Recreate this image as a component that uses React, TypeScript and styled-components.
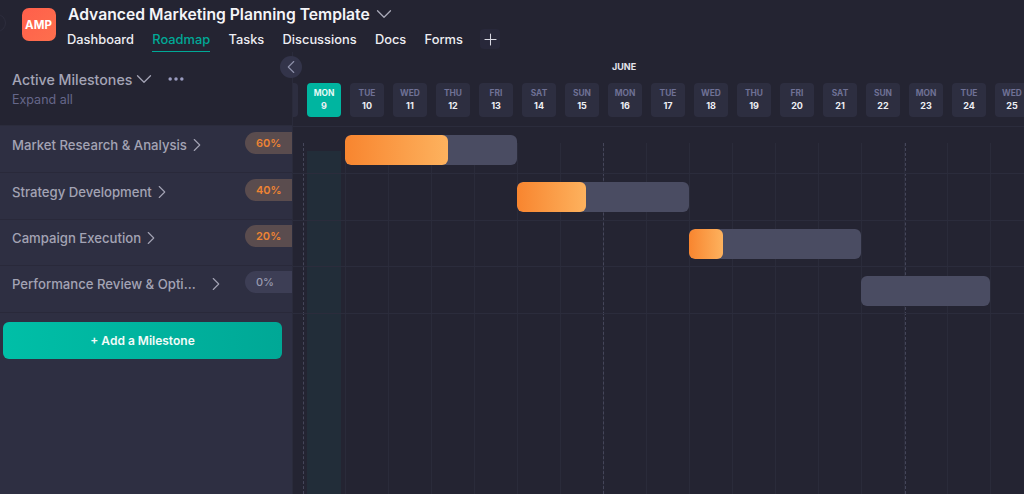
import React from "react";
import styled, { createGlobalStyle } from "styled-components";
import { ChevronDown, ChevronLeft, ChevronRight, Ellipsis, Plus } from "lucide-react";

const GlobalStyle = createGlobalStyle`
  html, body {
    margin: 0;
    padding: 0;
    background: #242432;
    font-family: Inter, "Liberation Sans", sans-serif;
  }
`;

const Page = styled.div`
  position: relative;
  width: 1024px;
  height: 494px;
  overflow: hidden;
  background: #242432;
`;

const EdgeRing = styled.div`
  position: absolute;
  left: -12px;
  top: 14px;
  width: 16px;
  height: 16px;
  border: 1px solid #2d2d3d;
  border-radius: 50%;
`;

const Header = styled.header`
  display: flex;
  gap: 11px;
  height: 52px;
  padding: 8px 0 0 22px;
  box-sizing: border-box;
`;

const Logo = styled.div`
  display: flex;
  align-items: center;
  justify-content: center;
  width: 34px;
  height: 33px;
  padding-right: 1px;
  box-sizing: border-box;
  border-radius: 7px;
  background: linear-gradient(135deg, #ff5f4b, #fd6f4d);
  color: #fff;
  font-size: 11.5px;
  font-weight: 700;
`;

const HeaderText = styled.div`
  display: flex;
  flex-direction: column;
`;

const TitleRow = styled.div`
  display: flex;
  align-items: center;
  gap: 1.5px;
  height: 14px;
  margin: -1px 0 8px 1px;
  svg {
    color: #a9a9b8;
  }
`;

const Title = styled.h1`
  margin: 0;
  font-size: 15.7px;
  font-weight: 600;
  color: #f4f4f8;
`;

const Nav = styled.nav`
  display: flex;
  align-items: flex-start;
  gap: 18.3px;
`;

const NavItem = styled.a<{ $active?: boolean }>`
  height: 19px;
  padding-top: 3px;
  font-size: 12.85px;
  line-height: 16px;
  font-weight: 500;
  color: ${(p) => (p.$active ? "#00a997" : "#eeeef3")};
  border-bottom: 1px solid ${(p) => (p.$active ? "#00a997" : "transparent")};
`;

const AddTab = styled.button`
  display: flex;
  align-items: center;
  justify-content: center;
  width: 20px;
  height: 20px;
  margin-left: -1px;
  padding: 0;
  background: #28283a;
  border: 0;
  border-radius: 4px;
  color: #d8d8e2;
`;

const Main = styled.div`
  display: flex;
  height: 442px;
`;

const Sidebar = styled.aside`
  display: flex;
  flex-direction: column;
  width: 293px;
  flex: none;
  border-right: 1px solid #2a2b3b;
  box-sizing: border-box;
  background: #2e2f42;
`;

const SidebarHead = styled.div`
  height: 74px;
  padding: 17px 12px 0;
  box-sizing: border-box;
  background: #242432;
  border-bottom: 1px solid #2b2c3c;
`;

const MilestoneHeading = styled.div`
  display: flex;
  align-items: center;
  height: 20px;
  color: #a4a4b6;
  font-size: 14.2px;
  font-weight: 500;
  svg {
    color: #a4a4b6;
    flex: none;
  }
`;

const HeadingChevron = styled.span`
  display: flex;
  margin-left: -1.5px;
`;

const Dots = styled.span`
  display: flex;
  margin-left: 9.5px;
  svg {
    color: #9a9cc0;
  }
`;

const ExpandAll = styled.div`
  margin-top: 3px;
  color: #66678a;
  font-size: 12.5px;
  line-height: 16px;
`;

const Row = styled.div<{ $top: number }>`
  display: flex;
  align-items: flex-start;
  height: 46.75px;
  padding: ${(p) => p.$top}px 0 0 12px;
  box-sizing: border-box;
  border-bottom: 1px solid #29293a;
`;

const RowLabel = styled.div`
  display: flex;
  align-items: center;
  flex: 1;
  height: 22px;
  margin-top: 2px;
  color: #a3a3b4;
  font-size: 13.15px;
  font-weight: 500;
  svg {
    color: #a3a3b4;
    flex: none;
    margin-left: -1px;
  }
`;

const LabelText = styled.span<{ $width?: number }>`
  ${(p) => (p.$width ? `width: ${p.$width}px;` : "")}
  white-space: nowrap;
`;

const Pill = styled.div<{ $zero?: boolean }>`
  display: flex;
  align-items: center;
  width: 47px;
  height: 22px;
  padding-left: 11px;
  box-sizing: border-box;
  border-radius: 11px 0 0 11px;
  background: ${(p) => (p.$zero ? "#3d3e55" : "#5a4c4e")};
  color: ${(p) => (p.$zero ? "#9a9bb0" : "#ee8433")};
  font-size: 11px;
  font-weight: ${(p) => (p.$zero ? 500 : 600)};
`;

const AddButton = styled.button`
  display: block;
  width: 279px;
  height: 37px;
  margin: 9px 0 0 3px;
  border: 0;
  border-radius: 6px;
  background: linear-gradient(90deg, #00bfa7, #00a896);
  color: #f2fbf9;
  font-family: inherit;
  font-size: 12px;
  font-weight: 600;
`;

const Timeline = styled.div`
  flex: 1;
  display: flex;
  flex-direction: column;
  min-width: 0;
`;

const Month = styled.div`
  height: 31px;
  padding: 9px 0 0 319px;
  box-sizing: border-box;
  color: #e4e4ec;
  font-size: 9px;
  line-height: 12px;
  font-weight: 700;
`;

const DayStrip = styled.div`
  display: flex;
  gap: 9px;
  height: 43px;
  border-bottom: 1px solid #2b2c3c;
`;

const DayStub = styled.div`
  flex: none;
  width: 5px;
  height: 34px;
  background: #2d2e40;
  border-radius: 0 4px 4px 0;
`;

const Day = styled.div<{ $today?: boolean }>`
  display: flex;
  flex: none;
  flex-direction: column;
  align-items: center;
  gap: 3px;
  width: 34px;
  height: 34px;
  padding-top: 5px;
  box-sizing: border-box;
  border-radius: 4px;
  background: ${(p) => (p.$today ? "#00b5a0" : "#2d2e40")};
  line-height: 10px;
  font-weight: 700;
`;

const DayName = styled.span<{ $today?: boolean }>`
  color: ${(p) => (p.$today ? "#e4faf6" : "#6f7195")};
  font-size: 8.4px;
`;

const DayNum = styled.span`
  color: #eeeef4;
  font-size: 9px;
`;

const Chart = styled.div`
  position: relative;
  flex: 1;
`;

const GridLines = styled.div`
  position: absolute;
  top: 16px;
  left: 52px;
  right: 0;
  bottom: 0;
  background: repeating-linear-gradient(
    90deg,
    #2a2b3a 0,
    #2a2b3a 1px,
    transparent 1px,
    transparent 43px
  );
`;

const WeekLine = styled.div<{ $x: number }>`
  position: absolute;
  top: 16px;
  bottom: 0;
  left: ${(p) => p.$x}px;
  border-left: 1px dashed #45465a;
`;

const TodayColumn = styled.div`
  position: absolute;
  top: 24px;
  bottom: 0;
  left: 14px;
  width: 34px;
  background: #222d39;
`;

const GanttRow = styled.div`
  position: relative;
  display: grid;
  grid-template-columns: repeat(17, 43px);
  align-items: center;
  height: 46.75px;
  margin-left: 9px;
  box-sizing: border-box;
  &::after {
    content: "";
    position: absolute;
    left: -9px;
    right: 0;
    bottom: 0;
    border-bottom: 1px solid #2b2c3c;
  }
`;

const Bar = styled.div<{ $start: number; $span: number }>`
  position: relative;
  z-index: 1;
  grid-column: ${(p) => p.$start} / span ${(p) => p.$span};
  height: 30px;
  border-radius: 6px;
  background: #4a4c62;
  overflow: hidden;
`;

const Progress = styled.div`
  height: 100%;
  border-radius: 6px;
  background: linear-gradient(90deg, #f8852f, #fdb25e);
`;

const Collapse = styled.button`
  position: absolute;
  left: 280px;
  top: 56px;
  display: flex;
  align-items: center;
  justify-content: center;
  width: 22px;
  height: 22px;
  padding: 0;
  border: 0;
  border-radius: 50%;
  background: #33344a;
  color: #8e90aa;
`;

const milestones = [
  { name: "Market Research & Analysis", progress: 60, start: 2, span: 4, top: 6 },
  { name: "Strategy Development", progress: 40, start: 6, span: 4, top: 6 },
  { name: "Campaign Execution", progress: 20, start: 10, span: 4, top: 5 },
  { name: "Performance Review & Opti...", progress: 0, start: 14, span: 3, top: 5, width: 194 },
];

const days = [
  ["MON", 9], ["TUE", 10], ["WED", 11], ["THU", 12], ["FRI", 13], ["SAT", 14],
  ["SUN", 15], ["MON", 16], ["TUE", 17], ["WED", 18], ["THU", 19], ["FRI", 20],
  ["SAT", 21], ["SUN", 22], ["MON", 23], ["TUE", 24], ["WED", 25],
] as const;

export default function App() {
  return (
    <Page>
      <GlobalStyle />
      <EdgeRing />
      <Header>
        <Logo>AMP</Logo>
        <HeaderText>
          <TitleRow>
            <Title>Advanced Marketing Planning Template</Title>
            <ChevronDown size={26} strokeWidth={1.2} />
          </TitleRow>
          <Nav>
            <NavItem>Dashboard</NavItem>
            <NavItem $active>Roadmap</NavItem>
            <NavItem>Tasks</NavItem>
            <NavItem>Discussions</NavItem>
            <NavItem>Docs</NavItem>
            <NavItem>Forms</NavItem>
            <AddTab>
              <Plus size={19} strokeWidth={1.3} />
            </AddTab>
          </Nav>
        </HeaderText>
      </Header>
      <Main>
        <Sidebar>
          <SidebarHead>
            <MilestoneHeading>
              Active Milestones
              <HeadingChevron>
                <ChevronDown size={26} strokeWidth={1.2} />
              </HeadingChevron>
              <Dots>
                <Ellipsis size={20} strokeWidth={2.2} />
              </Dots>
            </MilestoneHeading>
            <ExpandAll>Expand all</ExpandAll>
          </SidebarHead>
          {milestones.map((m) => (
            <Row key={m.name} $top={m.top}>
              <RowLabel>
                <LabelText $width={m.width}>{m.name}</LabelText>
                <ChevronRight size={22} strokeWidth={1.2} />
              </RowLabel>
              <Pill $zero={m.progress === 0}>{m.progress}%</Pill>
            </Row>
          ))}
          <AddButton>+ Add a Milestone</AddButton>
        </Sidebar>
        <Timeline>
          <Month>JUNE</Month>
          <DayStrip>
            <DayStub />
            {days.map(([name, num], i) => (
              <Day key={num} $today={i === 0}>
                <DayName $today={i === 0}>{name}</DayName>
                <DayNum>{num}</DayNum>
              </Day>
            ))}
          </DayStrip>
          <Chart>
            <GridLines />
            <TodayColumn />
            <WeekLine $x={10} />
            <WeekLine $x={310} />
            <WeekLine $x={612} />
            {milestones.map((m) => (
              <GanttRow key={m.name}>
                <Bar $start={m.start} $span={m.span}>
                  {m.progress > 0 && <Progress style={{ width: `${m.progress}%` }} />}
                </Bar>
              </GanttRow>
            ))}
          </Chart>
        </Timeline>
      </Main>
      <Collapse>
        <ChevronLeft size={24} strokeWidth={1.2} />
      </Collapse>
    </Page>
  );
}
